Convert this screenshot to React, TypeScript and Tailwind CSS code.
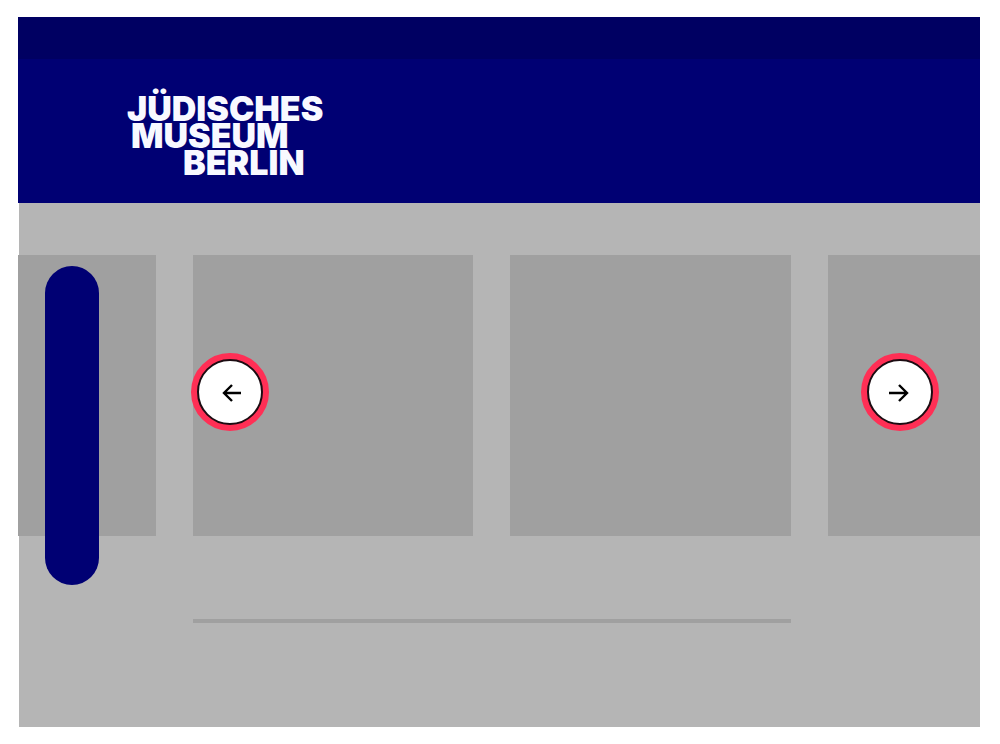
import type { ReactNode } from "react";

function ArrowButton({ label, className, children }: {
  label: string; className: string; children: ReactNode;
}) {
  return (
    <button
      type="button"
      aria-label={label}
      className={`absolute top-[98px] size-[78px] rounded-full border-[6px] border-[#ff2f55] bg-[#ff2f55] ${className}`}
    >
      <span className="flex size-full items-center justify-center rounded-full border-2 border-[#1c0c12] bg-white">
        <svg
          width="20"
          height="20"
          viewBox="0 0 20 20"
          fill="none"
          stroke="#000"
          strokeWidth="2.4"
          className="overflow-visible"
        >
          {children}
        </svg>
      </span>
    </button>
  );
}

function Logo() {
  return (
    <h1 className="font-['Inter',sans-serif] text-[34px] leading-[27px] font-black text-[#f8f9ff]">
      <span className="block">JÜDISCHES</span>
      <span className="block pl-1">MUSEUM</span>
      <span className="block pl-14">BERLIN</span>
    </h1>
  );
}

export default function App() {
  return (
    <div className="bg-white py-[17px] pr-5 pl-[18px]">
      <header className="bg-[#000073]">
        <div className="h-[42px] bg-[#000062]" />
        <div className="h-36 px-[109px] pt-9">
          <Logo />
        </div>
      </header>

      <main className="ml-px bg-[#b5b5b5] pt-[52px] pb-[104px]">
        <section className="relative -ml-px">
          <div className="flex h-[281px] gap-[37px]">
            <div className="flex-[138] bg-[#a0a0a0]" />
            <div className="flex-[280] bg-[#a0a0a0]" />
            <div className="flex-[280] bg-[#a0a0a0]" />
            <div className="flex-[152] bg-[#a0a0a0]" />
          </div>

          {/* Floating side bar */}
          <div className="absolute top-[11px] left-[27px] h-[319px] w-[54px] rounded-full bg-[#000073]" />

          <ArrowButton label="Zurück" className="left-[18%]">
            <path d="M12 3 4 11l8 8M4 11h17" />
          </ArrowButton>
          <ArrowButton label="Weiter" className="right-[41px]">
            <path d="m9 3 8 8-8 8M17 11H-1" />
          </ArrowButton>
        </section>

        {/* Scroll track */}
        <div className="mt-[83px] mr-[189px] ml-[174px] h-1 bg-[#a0a0a0]" />
      </main>
    </div>
  );
}
